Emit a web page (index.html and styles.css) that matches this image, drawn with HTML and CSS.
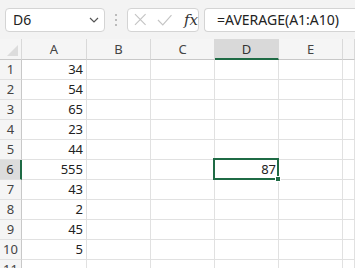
FILE: index.html
```html
<!DOCTYPE html>
<html lang="en">
<head>
    <meta charset="UTF-8">
    <meta name="viewport" content="width=device-width, initial-scale=1.0">
    <title>Sheet</title>
    <link rel="stylesheet" href="styles.css">
</head>
<body>
    <div class="toolbar">
        <div class="name-box">
            <span>D6</span>
            <svg class="chevron" width="10" height="6" viewBox="0 0 10 6"><path d="M1 1 L5 5 L9 1" fill="none" stroke="#555" stroke-width="1.2"/></svg>
        </div>
        <div class="grip"><i></i><i></i><i></i></div>
        <div class="fx-box">
            <svg width="13" height="13" viewBox="0 0 13 13"><path d="M1 1 L12 12 M12 1 L1 12" stroke="#c4c4c4" stroke-width="1.2" fill="none"/></svg>
            <svg width="16" height="12" viewBox="0 0 16 12"><path d="M1 6 L6 11 L15 1" stroke="#c4c4c4" stroke-width="1.2" fill="none"/></svg>
            <span class="fx">fx</span>
        </div>
        <div class="formula">=AVERAGE(A1:A10)</div>
    </div>
    <div class="sheet">
        <div class="corner"></div>
        <div class="col-head">A</div>
        <div class="col-head">B</div>
        <div class="col-head">C</div>
        <div class="col-head active">D</div>
        <div class="col-head">E</div>
        <div class="col-head"></div>

        <div class="row-head">1</div><div class="cell">34</div><div class="cell"></div><div class="cell"></div><div class="cell"></div><div class="cell"></div><div class="cell"></div>
        <div class="row-head">2</div><div class="cell">54</div><div class="cell"></div><div class="cell"></div><div class="cell"></div><div class="cell"></div><div class="cell"></div>
        <div class="row-head">3</div><div class="cell">65</div><div class="cell"></div><div class="cell"></div><div class="cell"></div><div class="cell"></div><div class="cell"></div>
        <div class="row-head">4</div><div class="cell">23</div><div class="cell"></div><div class="cell"></div><div class="cell"></div><div class="cell"></div><div class="cell"></div>
        <div class="row-head">5</div><div class="cell">44</div><div class="cell"></div><div class="cell"></div><div class="cell"></div><div class="cell"></div><div class="cell"></div>
        <div class="row-head active">6</div><div class="cell">555</div><div class="cell"></div><div class="cell"></div><div class="cell selected">87</div><div class="cell"></div><div class="cell"></div>
        <div class="row-head">7</div><div class="cell">43</div><div class="cell"></div><div class="cell"></div><div class="cell"></div><div class="cell"></div><div class="cell"></div>
        <div class="row-head">8</div><div class="cell">2</div><div class="cell"></div><div class="cell"></div><div class="cell"></div><div class="cell"></div><div class="cell"></div>
        <div class="row-head">9</div><div class="cell">45</div><div class="cell"></div><div class="cell"></div><div class="cell"></div><div class="cell"></div><div class="cell"></div>
        <div class="row-head">10</div><div class="cell">5</div><div class="cell"></div><div class="cell"></div><div class="cell"></div><div class="cell"></div><div class="cell"></div>
        <div class="row-head">11</div><div class="cell"></div><div class="cell"></div><div class="cell"></div><div class="cell"></div><div class="cell"></div><div class="cell"></div>
    </div>
</body>
</html>
```

FILE: styles.css
```css
body {
    margin: 0;
    font-family: "Noto Sans", "Open Sans", sans-serif;
    color: #222;
    background: #fff;
    overflow: hidden;
}
.toolbar {
    display: flex;
    align-items: center;
    height: 39px;
    padding: 0 0 0 5px;
    background: #f3f3f3;
    box-sizing: border-box;
}
.name-box {
    display: flex;
    align-items: center;
    justify-content: space-between;
    width: 100px;
    height: 24px;
    padding: 0 5px 0 7px;
    box-sizing: border-box;
    background: #fff;
    border: 1px solid #d4d4d4;
    border-radius: 4px;
    font-size: 14px;
}
.chevron {
    margin-top: 1px;
}
.grip {
    display: flex;
    flex-direction: column;
    gap: 3px;
    width: 22px;
    align-items: center;
}
.grip i {
    width: 2px;
    height: 2px;
    background: #a8a8a8;
    border-radius: 1px;
}
.fx-box {
    display: flex;
    align-items: center;
    gap: 10px;
    width: 72px;
    height: 24px;
    padding: 0 0 0 6px;
    box-sizing: border-box;
    background: #fff;
    border: 1px solid #d4d4d4;
    border-radius: 4px;
}
.fx {
    font-family: "DejaVu Serif", "Liberation Serif", serif;
    font-style: italic;
    font-size: 15px;
    color: #333;
    margin-left: 2px;
}
.formula {
    flex: 1;
    height: 24px;
    margin-left: 5px;
    padding: 0 0 0 12px;
    box-sizing: border-box;
    background: #fff;
    border: 1px solid #d4d4d4;
    border-right: none;
    border-radius: 4px 0 0 4px;
    font-size: 14px;
    line-height: 22px;
}
.sheet {
    display: grid;
    grid-template-columns: 22px 65px 64px 64px 64px 64px 1fr;
    grid-template-rows: 21px;
    grid-auto-rows: 20px;
    font-size: 13px;
}
.corner, .col-head, .row-head {
    background: #f5f5f5;
    color: #444;
    box-sizing: border-box;
    border-right: 1px solid #d9d9d9;
    border-bottom: 1px solid #c8c8c8;
}
.corner {
    position: relative;
}
.corner::after {
    content: "";
    position: absolute;
    right: 3px;
    bottom: 3px;
    border-left: 11px solid transparent;
    border-bottom: 11px solid #dcdcdc;
}
.col-head {
    text-align: center;
    line-height: 20px;
}
.col-head.active {
    background: #d9d9d9;
    border-bottom: 2px solid #1f6b45;
    color: #333;
}
.row-head {
    text-align: center;
    line-height: 19px;
    border-bottom-color: #e1e1e1;
    border-right-color: #c8c8c8;
}
.row-head.active {
    background: #dcdcdc;
    border-right: 2px solid #1f6b45;
    color: #333;
}
.cell {
    box-sizing: border-box;
    border-right: 1px solid #e1e1e1;
    border-bottom: 1px solid #e1e1e1;
    text-align: right;
    padding-right: 3px;
    line-height: 19px;
}
.cell.selected {
    position: relative;
    padding-right: 2px;
}
.cell.selected::before {
    content: "";
    position: absolute;
    left: -2px;
    top: -2px;
    right: -1px;
    bottom: -1px;
    border: 2px solid #1f6b45;
}
.cell.selected::after {
    content: "";
    position: absolute;
    right: -3px;
    bottom: -3px;
    width: 6px;
    height: 6px;
    background: #1f6b45;
    border: 1px solid #fff;
    box-sizing: border-box;
}
```
